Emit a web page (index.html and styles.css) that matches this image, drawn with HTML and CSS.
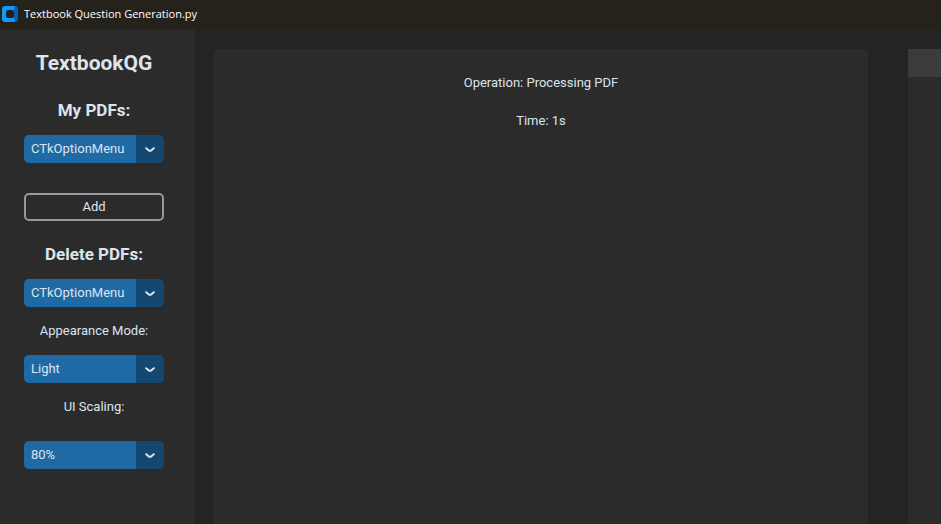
FILE: index.html
```html
<!DOCTYPE html>
<html lang="en">
<head>
<meta charset="utf-8">
<title>Textbook Question Generation.py</title>
<link rel="stylesheet" href="styles.css">
</head>
<body>
<header class="titlebar">
  <svg class="app-icon" width="16" height="16" viewBox="0 0 16 16" aria-hidden="true">
    <path fill="#0a9bff" d="M3 0h10v16H3a3 3 0 0 1-3-3V3a3 3 0 0 1 3-3z"/>
    <path fill="#0560ad" d="M13 0a3 3 0 0 1 3 3v10a3 3 0 0 1-3 3l-1-4V4z"/>
    <rect x="4" y="4" width="8" height="8" rx="2" fill="#221f1c"/>
  </svg>
  <span>Textbook Question Generation.py</span>
</header>
<div class="window">
  <aside class="sidebar">
    <h1 class="brand">TextbookQG</h1>
    <label class="heading" for="pdfs">My PDFs:</label>
    <div class="option">
      <select id="pdfs"><option>CTkOptionMenu</option></select>
      <svg class="chevron" width="10" height="6" viewBox="0 0 10 6" aria-hidden="true"><path d="M1.200 1.200L4.200 3.700H5.800L8.800 1.200"/></svg>
    </div>
    <button class="add" type="button">Add</button>
    <label class="heading" for="delete-pdfs">Delete PDFs:</label>
    <div class="option">
      <select id="delete-pdfs"><option>CTkOptionMenu</option></select>
      <svg class="chevron" width="10" height="6" viewBox="0 0 10 6" aria-hidden="true"><path d="M1.200 1.200L4.200 3.700H5.800L8.800 1.200"/></svg>
    </div>
    <label class="caption" for="appearance">Appearance Mode:</label>
    <div class="option">
      <select id="appearance"><option>Light</option><option>Dark</option><option>System</option></select>
      <svg class="chevron" width="10" height="6" viewBox="0 0 10 6" aria-hidden="true"><path d="M1.200 1.200L4.200 3.700H5.800L8.800 1.200"/></svg>
    </div>
    <label class="caption" for="scaling">UI Scaling:</label>
    <div class="option option-spaced">
      <select id="scaling"><option>80%</option><option>90%</option><option>100%</option></select>
      <svg class="chevron" width="10" height="6" viewBox="0 0 10 6" aria-hidden="true"><path d="M1.200 1.200L4.200 3.700H5.800L8.800 1.200"/></svg>
    </div>
  </aside>
  <main class="panel">
    <p>Operation: Processing PDF</p>
    <p>Time: 1s</p>
  </main>
  <section class="side-panel"><div class="side-header"></div></section>
</div>
</body>
</html>
```
FILE: styles.css
```css
* { box-sizing: border-box; }

body {
  margin: 0;
  min-height: 100vh;
  display: flex;
  flex-direction: column;
  background: #242424;
  color: #dce4ee;
  font: 13px/28px Roboto, sans-serif;
}

.titlebar {
  display: flex;
  align-items: center;
  gap: 6px;
  height: 29px;
  padding: 0 2px 2px;
  background: #25211b;
  color: #fff;
  font: 11px/16px "Open Sans", "Noto Sans", sans-serif;
}

.window {
  flex: 1;
  display: flex;
}

.sidebar {
  width: 194px;
  padding: 20px 30px 20px 24px;
  display: flex;
  flex-direction: column;
  background: #2b2b2b;
  text-align: center;
}

.brand {
  margin: 0;
  font-size: 21px;
  font-weight: 700;
  line-height: 28px;
}

.heading {
  margin: 19px 0 11px;
  font-size: 17px;
  font-weight: 700;
  line-height: 28px;
}

.caption { margin: 10px 0; }

.option {
  position: relative;
  height: 28px;
}

.option-spaced { margin-top: 10px; }

.option select {
  appearance: none;
  width: 100%;
  height: 28px;
  padding: 0 28px 0 7px;
  border: 0;
  border-radius: 5px;
  background: linear-gradient(to left, #144870 28px, #1f6aa5 28px);
  color: inherit;
  font: inherit;
}

.chevron {
  position: absolute;
  top: 12px;
  right: 9px;
  fill: none;
  stroke: #dce4ee;
  stroke-width: 2;
  stroke-linecap: round;
  stroke-linejoin: round;
  pointer-events: none;
}

.add {
  height: 28px;
  margin-top: 30px;
  padding: 0;
  border: 2px solid #949a9f;
  border-radius: 5px;
  background: transparent;
  color: inherit;
  font: inherit;
  line-height: 24px;
}

.panel {
  flex: 1;
  margin: 20px 40px 0 20px;
  padding-top: 20px;
  border-radius: 5px 5px 0 0;
  background: #2b2b2b;
  text-align: center;
}

.panel p { margin: 0 0 10px; }

.side-panel {
  width: 33px;
  margin-top: 20px;
  background: #2b2b2b;
}

.side-header {
  height: 28px;
  background: #3b3b3b;
}
```
